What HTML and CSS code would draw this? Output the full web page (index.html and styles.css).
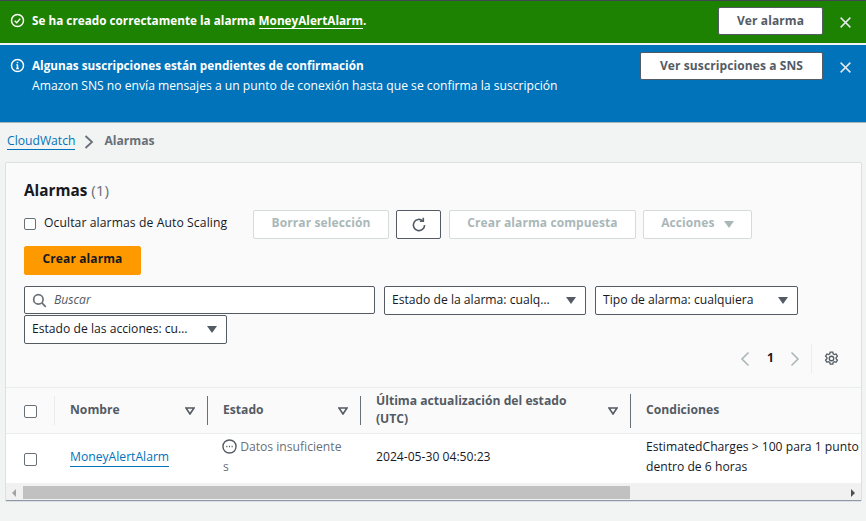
FILE: index.html
```html
<!DOCTYPE html>
<html lang="es">
<head>
  <meta charset="UTF-8" />
  <meta name="viewport" content="width=device-width, initial-scale=1" />
  <title>Alarmas | CloudWatch</title>
  <link rel="stylesheet" href="styles.css">
</head>
<body>

<div class="flash flash-ok">
  <svg class="flash-icon" viewBox="0 0 16 16"><circle cx="8" cy="8" r="6.4"/><path d="M5 8.2l2.2 2.2L11 6"/></svg>
  <div class="flash-text"><b>Se ha creado correctamente la alarma <a href="#">MoneyAlertAlarm</a>.</b></div>
  <button class="flash-btn btn-alarm">Ver alarma</button>
  <svg class="flash-close" viewBox="0 0 16 16"><path d="M2 2l12 12M14 2L2 14"/></svg>
</div>

<div class="flash flash-info">
  <svg class="flash-icon" viewBox="0 0 16 16"><circle cx="8" cy="8" r="6.4"/><path d="M8 7.2v4M6.6 11.2h2.8M6.8 7.2H8"/><path d="M8 4.2v1.4"/></svg>
  <div class="flash-text">
    <b>Algunas suscripciones están pendientes de confirmación</b>
    <p>Amazon SNS no envía mensajes a un punto de conexión hasta que se confirma la suscripción</p>
  </div>
  <button class="flash-btn btn-sns">Ver suscripciones a SNS</button>
  <svg class="flash-close" viewBox="0 0 16 16"><path d="M2 2l12 12M14 2L2 14"/></svg>
</div>

<nav class="crumbs">
  <a href="#">CloudWatch</a>
  <svg viewBox="0 0 10 16"><path d="M1.5 2l6.5 6-6.5 6"/></svg>
  <span>Alarmas</span>
</nav>

<section class="card">
  <h1 class="card-title">Alarmas <span>(1)</span></h1>

  <div class="actions">
    <label class="hide-auto"><span class="check"></span>Ocultar alarmas de Auto Scaling</label>
    <button class="btn btn-off btn-clear">Borrar selección</button>
    <button class="btn btn-refresh" aria-label="Actualizar">
      <svg viewBox="0 0 16 16"><path d="M13.6 8a5.6 5.6 0 1 1-1.9-4.2"/><path d="M12.3 0.8v3.4H8.9"/></svg>
    </button>
    <button class="btn btn-off btn-compound">Crear alarma compuesta</button>
    <button class="btn btn-off btn-actions">Acciones <i class="caret"></i></button>
    <button class="btn btn-create">Crear alarma</button>
  </div>

  <div class="filters">
    <div class="search">
      <svg viewBox="0 0 16 16"><circle cx="6.8" cy="6.8" r="5"/><path d="M10.5 10.5l4.2 4.2"/></svg>
      <em>Buscar</em>
    </div>
    <div class="select sel-state"><span>Estado de la alarma: cualq…</span><i class="caret"></i></div>
    <div class="select sel-type"><span>Tipo de alarma: cualquiera</span><i class="caret"></i></div>
    <div class="select sel-actions"><span>Estado de las acciones: cu…</span><i class="caret"></i></div>
  </div>

  <div class="pager">
    <svg class="pager-arrow" viewBox="0 0 10 16"><path d="M8.5 1.5L2 8l6.5 6.5"/></svg>
    <strong>1</strong>
    <svg class="pager-arrow" viewBox="0 0 10 16"><path d="M1.5 1.5L8 8l-6.5 6.5"/></svg>
    <div class="pager-sep">
      <svg class="gear" viewBox="0 0 16 16"><circle cx="8" cy="8" r="2.4"/><path d="M6.6 1.2h2.8l.4 1.9 1.3.7 1.8-.6 1.4 2.4-1.4 1.3v1.4l1.4 1.3-1.4 2.4-1.8-.6-1.3.7-.4 1.9H6.6l-.4-1.9-1.3-.7-1.8.6-1.4-2.4 1.4-1.3V6.9L1.7 5.6l1.4-2.4 1.8.6 1.3-.7z"/></svg>
    </div>
  </div>

  <div class="table-wrap">
    <table class="alarms">
      <colgroup>
        <col class="col-check"><col class="col-name"><col class="col-state"><col class="col-date"><col class="col-cond">
      </colgroup>
      <thead>
        <tr>
          <th><span class="check"></span></th>
          <th><div class="th-in"><span>Nombre</span><svg class="sort" viewBox="0 0 10 8"><path d="M1 1h8L5 7z"/></svg></div></th>
          <th><div class="th-in"><span>Estado</span><svg class="sort" viewBox="0 0 10 8"><path d="M1 1h8L5 7z"/></svg></div></th>
          <th><div class="th-in"><span>Última actualización del estado (UTC)</span><svg class="sort" viewBox="0 0 10 8"><path d="M1 1h8L5 7z"/></svg></div></th>
          <th><div class="th-in last"><span>Condiciones</span></div></th>
        </tr>
      </thead>
      <tbody>
        <tr>
          <td><span class="check"></span></td>
          <td><a href="#">MoneyAlertAlarm</a></td>
          <td class="state">
            <svg viewBox="0 0 16 16"><circle cx="8" cy="8" r="7"/><path d="M4.6 8h1.2M7.4 8h1.2M10.2 8h1.2"/></svg>
            Datos insuficiente<br>s
          </td>
          <td>2024-05-30 04:50:23</td>
          <td>EstimatedCharges &gt; 100 para 1 punto<br>dentro de 6 horas</td>
        </tr>
      </tbody>
    </table>
  </div>

  <div class="scrollbar">
    <i class="sb-left"></i>
    <div class="sb-track"><div class="sb-thumb"></div></div>
    <i class="sb-right"></i>
  </div>
</section>

</body>
</html>
```

FILE: styles.css
```css
html, body {
  height: 100%;
}
body {
  margin: 0;
  background: #f2f3f3;
  color: #16191f;
  font-family: 'Open Sans', 'Noto Sans', sans-serif;
  font-size: 12.15px;
  line-height: 18px;
  overflow: hidden;
  border-top: 1px solid #414750;
}
button {
  font-family: inherit;
  font-weight: 700;
  font-size: 12px;
  letter-spacing: 0.1px;
  cursor: pointer;
}
a {
  color: #0073bb;
  text-decoration: none;
  border-bottom: 1px solid currentColor;
}

/* banners */
.flash {
  display: flex;
  align-items: flex-start;
  color: #fff;
  padding: 6px 11px 0 10px;
  box-sizing: border-box;
}
.flash-ok {
  background: #1d8102;
  height: 42px;
}
.flash-info {
  background: #0073bb;
  height: 77px;
  margin-top: 2px;
  padding-top: 7px;
}
.flash-icon {
  width: 15px;
  height: 15px;
  margin: 6px 7px 0 0;
  flex: none;
  fill: none;
  stroke: #fff;
  stroke-width: 1.6;
}
.flash-text {
  flex: 1;
  padding-top: 4px;
}
.flash-text b {
  font-size: 11.75px;
}
.flash-text a {
  color: #fff;
}
.flash-text p {
  margin: 2px 0 0;
}
.flash-btn {
  height: 28px;
  background: #fff;
  color: #545b64;
  border: 1px solid #545b64;
  border-radius: 2px;
  padding: 0 0 2px;
}
.btn-alarm {
  width: 105px;
}
.btn-sns {
  width: 183px;
}
.flash-close {
  width: 13px;
  height: 13px;
  margin: 9px 3px 0 16px;
  flex: none;
  fill: none;
  stroke: #e6e9e9;
  stroke-width: 1.8;
}

/* breadcrumb */
.crumbs {
  display: flex;
  align-items: center;
  border-top: 1px solid #aab7b8;
  padding: 0 6px 4px 7px;
  height: 36px;
}
.crumbs a {
  line-height: 16px;
}
.crumbs svg {
  width: 10px;
  height: 16px;
  margin: 2px 10px 0 9px;
  fill: none;
  stroke: #687078;
  stroke-width: 1.8;
}
.crumbs span {
  font-weight: 700;
  color: #687078;
}

/* card */
.card {
  margin: 0 5px 0 6px;
  background: #fafafa;
  height: 338px;
  box-sizing: border-box;
  padding-top: 16px;
  border-bottom: 1px solid #8d99a8;
  box-shadow: 0 0 1px rgb(0 28 36 / 0.5);
}
.card-title {
  margin: 0 0 9px 18px;
  font-size: 15.3px;
  line-height: 22px;
  font-weight: 700;
  color: #16191f;
}
.card-title span {
  font-weight: 400;
  color: #687078;
}
.actions {
  display: flex;
  flex-wrap: wrap;
  gap: 7px 8px;
  padding: 0 90px 0 18px;
}
.hide-auto {
  width: 221px;
  display: flex;
  color: #16191f;
  height: 29px;
  padding-top: 4px;
  box-sizing: border-box;
  letter-spacing: 0.1px;
}
.check {
  display: inline-block;
  flex: none;
  width: 10px;
  height: 10px;
  border: 1px solid #687078;
  border-radius: 2px;
  background: #fff;
  margin: 4px 8px 0 0;
}
.btn {
  height: 29px;
  background: #fff;
  border: 1px solid #545b64;
  border-radius: 2px;
  padding: 0 0 4px;
}
.btn-off {
  color: #aab7b8;
  border-color: #d5dbdb;
}
.btn-clear {
  width: 136px;
  margin-right: -1px;
}
.btn-refresh {
  width: 45px;
  display: flex;
  align-items: center;
  justify-content: center;
  padding: 0;
}
.btn-refresh svg {
  width: 16px;
  height: 16px;
  fill: none;
  stroke: #545b64;
  stroke-width: 1.6;
}
.btn-compound {
  width: 187px;
  margin-right: -1px;
}
.btn-actions {
  width: 109px;
}
.btn-actions .caret {
  margin-left: 6px;
  border-top-color: #aab7b8;
}
.btn-create {
  width: 117px;
  background: #ff9900;
  border-color: #ff9900;
  color: #16191f;
}
.caret {
  display: inline-block;
  width: 0;
  height: 0;
  border-left: 5px solid transparent;
  border-right: 5px solid transparent;
  border-top: 7px solid #545b64;
  vertical-align: -1px;
}

/* filters */
.filters {
  display: flex;
  flex-wrap: wrap;
  margin-top: 11px;
  padding: 0 40px 0 18px;
}
.search {
  width: 351px;
  height: 28px;
  margin-right: 9px;
  display: flex;
  align-items: center;
  box-sizing: border-box;
  border: 1px solid #545b64;
  border-radius: 2px;
  background: #fff;
  padding-left: 7px;
  color: #545b64;
}
.search svg {
  width: 15px;
  height: 15px;
  margin-right: 7px;
  fill: none;
  stroke: #687078;
  stroke-width: 1.8;
}
.select {
  height: 29px;
  display: flex;
  align-items: center;
  justify-content: space-between;
  box-sizing: border-box;
  border: 1px solid #545b64;
  border-radius: 2px;
  background: #fff;
  padding: 0 9px 2px 7px;
  white-space: nowrap;
}
.select .caret {
  margin-top: 2px;
}
.sel-state {
  width: 202px;
  margin-right: 9px;
}
.sel-type {
  width: 203px;
}
.sel-actions {
  width: 203px;
}

/* pager */
.pager {
  display: flex;
  align-items: center;
  justify-content: flex-end;
  height: 29px;
  padding-right: 22px;
}
.pager strong {
  margin: 0 16px 2px 17px;
}
.pager-arrow {
  width: 10px;
  height: 16px;
  fill: none;
  stroke: #aab7b8;
  stroke-width: 1.6;
}
.pager-sep {
  display: flex;
  align-items: center;
  height: 29px;
  margin-left: 11px;
  padding-left: 12px;
  border-left: 1px solid #eaeded;
}
.gear {
  width: 15px;
  height: 15px;
  fill: none;
  stroke: #545b64;
  stroke-width: 1.4;
}

/* table */
.table-wrap {
  overflow: hidden;
  margin-top: 14px;
}
.alarms {
  border-collapse: separate;
  border-spacing: 0;
  table-layout: fixed;
  width: 1000px;
}
.col-check { width: 49px; }
.col-name { width: 153px; }
.col-state { width: 153px; }
.col-date { width: 270px; }
.col-cond { width: 375px; }
.alarms th {
  height: 45px;
  padding: 0;
  text-align: left;
  font-weight: 700;
  color: #545b64;
  border-top: 1px solid #eaeded;
  border-bottom: 1px solid #eaeded;
}
.alarms th:first-child,
.alarms td:first-child {
  padding: 0 0 0 18px;
}
.alarms .check {
  width: 11px;
  height: 11px;
  margin: 0;
  vertical-align: middle;
}
.th-in {
  display: flex;
  align-items: center;
  justify-content: space-between;
  min-height: 29px;
  padding: 0 12px 0 15px;
  border-right: 1px solid #687078;
}
.th-in span {
  margin-top: -2px;
}
.alarms th:nth-child(2) .th-in {
  border-left: 1px solid #eaeded;
  margin-left: -1px;
}
.th-in.last {
  border-right: 0;
}
.sort {
  flex: none;
  width: 10px;
  height: 8px;
  margin-left: 8px;
  fill: none;
  stroke: #545b64;
  stroke-width: 1.6;
}
.alarms td {
  height: 49px;
  padding: 0 15px 4px;
  background: #fff;
  color: #16191f;
  line-height: 20px;
  box-sizing: border-box;
}
.alarms a {
  padding-bottom: 1px;
}
.alarms .state {
  color: #687078;
  white-space: nowrap;
}
.state svg {
  width: 15px;
  height: 15px;
  margin-left: -1px;
  vertical-align: -3px;
  fill: none;
  stroke: #545b64;
  stroke-width: 1.5;
}

/* scrollbar */
.scrollbar {
  display: flex;
  align-items: flex-end;
  height: 16px;
  padding-bottom: 1px;
  background: #f1f1f1;
}
.sb-track {
  flex: 1;
  height: 13px;
}
.sb-thumb {
  width: 607px;
  height: 100%;
  background: #c1c1c1;
}
.sb-left, .sb-right {
  width: 0;
  height: 0;
  margin-bottom: 2px;
  border-top: 4px solid transparent;
  border-bottom: 4px solid transparent;
}
.sb-left {
  border-right: 4px solid #a3a3a3;
  margin-left: 6px;
  margin-right: 7px;
}
.sb-right {
  border-left: 4px solid #505050;
  margin-right: 6px;
}
```
